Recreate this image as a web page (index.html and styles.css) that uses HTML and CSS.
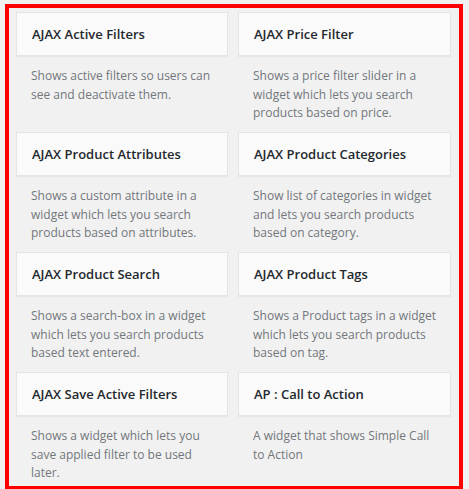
FILE: index.html
```html
<!DOCTYPE html>
<html lang="en">
<head>
  <meta charset="UTF-8">
  <title>Available Widgets</title>
  <link rel="stylesheet" href="styles.css">
</head>
<body>
  <div class="widget-list">
    <div class="widget">
      <div class="widget-top"><h3>AJAX Active Filters</h3></div>
      <div class="widget-description">Shows active filters so users can see and deactivate them.</div>
    </div>
    <div class="widget">
      <div class="widget-top"><h3>AJAX Price Filter</h3></div>
      <div class="widget-description">Shows a price filter slider in a widget which lets you search products based on price.</div>
    </div>
    <div class="widget">
      <div class="widget-top"><h3>AJAX Product Attributes</h3></div>
      <div class="widget-description">Shows a custom attribute in a widget which lets you search products based on attributes.</div>
    </div>
    <div class="widget">
      <div class="widget-top"><h3>AJAX Product Categories</h3></div>
      <div class="widget-description">Show list of categories in widget and lets you search products based on category.</div>
    </div>
    <div class="widget">
      <div class="widget-top"><h3>AJAX Product Search</h3></div>
      <div class="widget-description">Shows a search-box in a widget which lets you search products based text entered.</div>
    </div>
    <div class="widget">
      <div class="widget-top"><h3>AJAX Product Tags</h3></div>
      <div class="widget-description">Shows a Product tags in a widget which lets you search products based on tag.</div>
    </div>
    <div class="widget">
      <div class="widget-top"><h3>AJAX Save Active Filters</h3></div>
      <div class="widget-description">Shows a widget which lets you save applied filter to be used later.</div>
    </div>
    <div class="widget">
      <div class="widget-top"><h3>AP : Call to Action</h3></div>
      <div class="widget-description">A widget that shows Simple Call to Action</div>
    </div>
  </div>
</body>
</html>
```

FILE: styles.css
```css
body {
  margin: 0;
  padding: 4px 0 0 5px;
  background: #f1f1f1;
  font-family: 'Open Sans', sans-serif;
  color: #23282d;
}
.widget-list {
  width: 437px;
  height: 474px;
  border: 4px solid #ff0000;
  padding: 4px 6px 0 7px;
  display: grid;
  grid-template-columns: 212px 213px;
  column-gap: 10px;
  align-content: start;
  overflow: hidden;
}
.widget-top {
  background: #fafafa;
  border: 1px solid #e5e5e5;
  box-shadow: 0 1px 1px rgba(0,0,0,0.04);
}
.widget-top h3 {
  margin: 0;
  padding: 0 15px;
  font-size: 13px;
  font-weight: 600;
  line-height: 42px;
  color: #23282d;
}
.widget-description {
  padding: 11px 12px 9.5px 15px;
  font-size: 12px;
  line-height: 18.5px;
  color: #72777c;
}
```
